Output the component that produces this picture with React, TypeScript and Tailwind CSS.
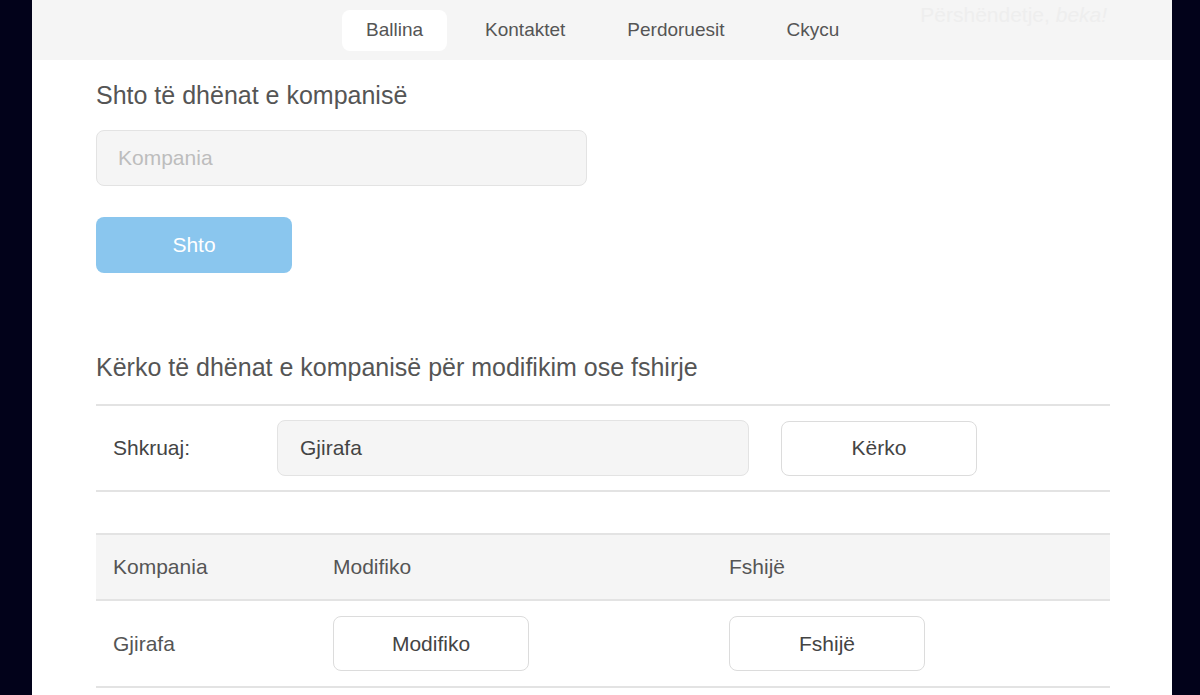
import React from "react";

const navItems = ["Ballina", "Kontaktet", "Perdoruesit", "Ckycu"];

function OutlineButton({ label }: { label: string }) {
  return (
    <button
      type="button"
      className="h-[55px] w-[196px] rounded-lg border border-[#dcdcdc] bg-white text-[21px] text-[#444]"
    >
      {label}
    </button>
  );
}

export default function App() {
  return (
    <div
      className="min-h-screen bg-[#02021a]"
      style={{ fontFamily: '"Liberation Sans", Arial, sans-serif' }}
    >
      <div className="ml-[32px] min-h-[695px] w-[1140px] bg-white">
        <header className="flex h-[60px] items-center bg-[#f5f5f5] pl-[310px]">
          <nav className="flex items-center gap-[14px]">
            {navItems.map((item, i) => (
              <a
                key={item}
                href="#"
                className={
                  i === 0
                    ? "flex h-[41px] items-center rounded-lg bg-white px-6 text-[19px] text-[#555]"
                    : "flex h-[41px] items-center rounded-lg px-6 text-[19px] text-[#555]"
                }
              >
                {item}
              </a>
            ))}
          </nav>
          <p className="mb-[30px] ml-[57px] text-[21px] leading-[30px] text-[#eeeeee]">
            Përshëndetje, <i>beka!</i>
          </p>
        </header>

        <main className="pl-[64px] pr-[62px]">
          <h2 className="mt-5 text-[25px] leading-[30px] text-[#555]">Shto të dhënat e kompanisë</h2>
          <input
            type="text"
            placeholder="Kompania"
            className="mt-5 block h-[56px] w-[491px] rounded-lg border border-[#e3e3e3] bg-[#f5f5f5] px-[21px] text-[21px] text-[#444] outline-none placeholder:text-[#bdbdbd]"
          />
          <button
            type="button"
            className="mt-[31px] h-[56px] w-[196px] rounded-lg bg-[#8ac6ee] text-[21px] text-white"
          >
            Shto
          </button>

          <h2 className="mt-[79px] text-[25px] leading-[30px] text-[#555]">
            Kërko të dhënat e kompanisë për modifikim ose fshirje
          </h2>

          <div className="mt-[22px] flex h-[88px] items-center border-y-2 border-[#e3e3e3] pl-[17px]">
            <span className="w-[164px] text-[21px] text-[#444]">Shkruaj:</span>
            <input
              type="text"
              defaultValue="Gjirafa"
              className="h-[56px] w-[472px] rounded-lg border border-[#e3e3e3] bg-[#f5f5f5] px-[22px] text-[21px] text-[#444] outline-none"
            />
            <div className="ml-[32px]">
              <OutlineButton label="Kërko" />
            </div>
          </div>

          <div className="mt-[41px] grid grid-cols-[221px_396px_1fr] border-t-2 border-[#e3e3e3]">
            <div className="col-span-3 grid h-[64px] grid-cols-subgrid items-center bg-[#f5f5f5] text-[21px] text-[#555]">
              <span className="pl-[17px]">Kompania</span>
              <span className="pl-4">Modifiko</span>
              <span className="pl-4">Fshijë</span>
            </div>
            <div className="col-span-3 grid h-[89px] grid-cols-subgrid items-center border-y-2 border-[#e3e3e3] text-[21px] text-[#555]">
              <span className="pl-[17px]">Gjirafa</span>
              <div className="pl-4">
                <OutlineButton label="Modifiko" />
              </div>
              <div className="pl-4">
                <OutlineButton label="Fshijë" />
              </div>
            </div>
          </div>
        </main>
      </div>
    </div>
  );
}
